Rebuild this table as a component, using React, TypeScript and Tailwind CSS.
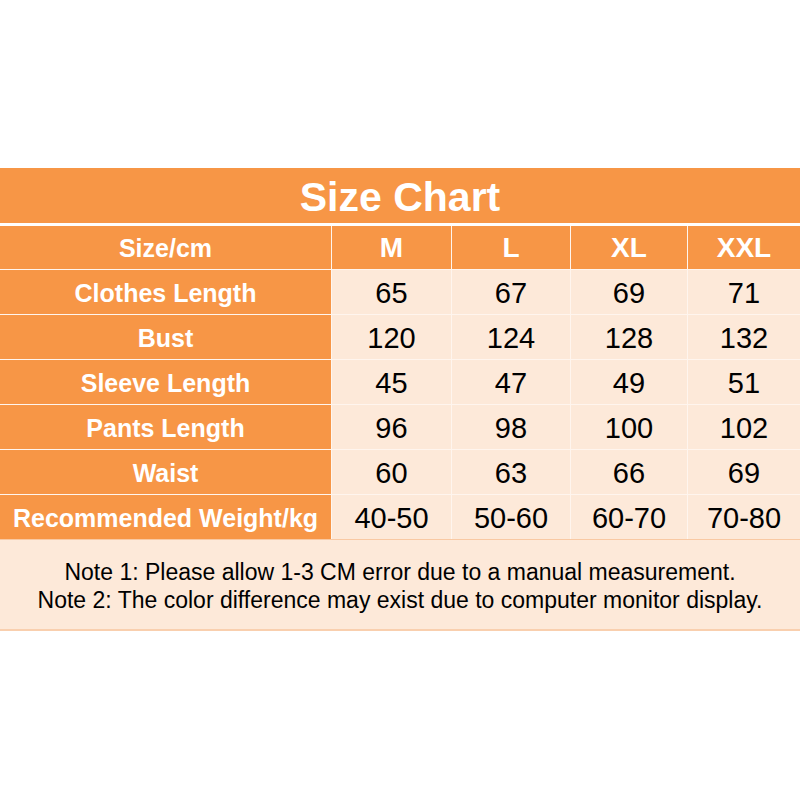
import React from 'react';

const sizes = ['M', 'L', 'XL', 'XXL'];

const rows: { label: string; values: string[] }[] = [
    { label: 'Clothes Length', values: ['65', '67', '69', '71'] },
    { label: 'Bust', values: ['120', '124', '128', '132'] },
    { label: 'Sleeve Length', values: ['45', '47', '49', '51'] },
    { label: 'Pants Length', values: ['96', '98', '100', '102'] },
    { label: 'Waist', values: ['60', '63', '66', '69'] },
    { label: 'Recommended Weight/kg', values: ['40-50', '50-60', '60-70', '70-80'] },
];

const cols = 'grid grid-cols-[331px_119px_118px_116px_112px] grid-rows-1 gap-x-px';

const App: React.FC = () => {
    return (
        <div className="w-[800px] h-[800px] bg-white pt-[168px] font-['Liberation_Sans',Arial,sans-serif]">
            {/* title bar */}
            <div className="h-[55px] bg-[#F79646] flex items-center justify-center">
                <span className="text-white font-bold text-[41px] leading-none pt-[4px]">Size Chart</span>
            </div>

            <div className="mt-[3px] flex flex-col gap-y-px bg-[#FFF5EE]">
                {/* header row */}
                <div className={`${cols} h-[43px]`}>
                    <div className="flex items-center justify-center bg-[#F79646] text-white font-bold text-[25px] leading-none pt-[1px]">Size/cm</div>
                    {sizes.map((s) => (
                        <div key={s} className="flex items-center justify-center bg-[#F79646] text-white font-bold text-[28px] leading-none pt-[1px]">
                            {s}
                        </div>
                    ))}
                </div>

                {/* body rows */}
                {rows.map((r) => (
                    <div key={r.label} className={`${cols} h-[44px]`}>
                        <div className="flex items-center justify-center bg-[#F79646] text-white font-bold text-[25px] leading-none pt-[3px]">
                            {r.label}
                        </div>
                        {r.values.map((v, i) => (
                            <div key={i} className="flex items-center justify-center bg-[#FDE9D9] text-black text-[29px] leading-none pt-[3px]">
                                {v}
                            </div>
                        ))}
                    </div>
                ))}
            </div>

            {/* notes */}
            <div className="h-[92px] bg-[#FDE9D9] border-t border-[#F9C9A3] border-b-2 border-b-[#F9CFAE] flex flex-col items-center justify-center pt-[3px] text-black text-[23px] leading-[28px]">
                <div>Note 1: Please allow 1-3 CM error due to a manual measurement.</div>
                <div>Note 2: The color difference may exist due to computer monitor display.</div>
            </div>
        </div>
    );
};

export default App;
